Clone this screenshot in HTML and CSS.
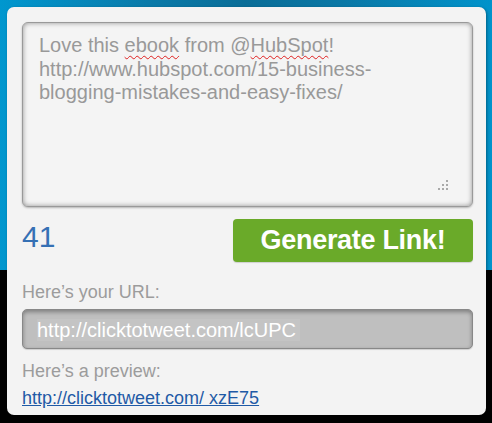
FILE: index.html
```html
<!DOCTYPE html>
<html>
<head>
<meta charset="utf-8">
<link rel="stylesheet" href="styles.css">
</head>
<body>
<div class="card">
  <div class="tweet-box">
    <div class="line">Love this <span class="misspelled">ebook</span> from @<span class="misspelled">HubSpot</span>!</div>
    <div class="line">http://www.hubspot.com/15-business-</div>
    <div class="line">blogging-mistakes-and-easy-fixes/</div>
    <svg class="grip" width="10" height="10" viewBox="0 0 10 10">
      <rect x="8" y="0" width="2" height="2" fill="#a9a9a9"/>
      <rect x="4" y="4" width="2" height="2" fill="#a9a9a9"/>
      <rect x="8" y="4" width="2" height="2" fill="#a9a9a9"/>
      <rect x="0" y="8" width="2" height="2" fill="#a9a9a9"/>
      <rect x="4" y="8" width="2" height="2" fill="#a9a9a9"/>
      <rect x="8" y="8" width="2" height="2" fill="#a9a9a9"/>
    </svg>
  </div>
  <div class="action-row">
    <div class="count">41</div>
    <div class="generate">Generate Link!</div>
  </div>
  <div class="label label-url">Here’s your URL:</div>
  <div class="url-field"><span class="url-text">http://clicktotweet.com/lcUPC</span></div>
  <div class="label label-preview">Here’s a preview:</div>
  <a class="preview-link" href="#">http://clicktotweet.com/ xzE75</a>
</div>
</body>
</html>
```
FILE: styles.css
```css
html, body {
  margin: 0;
  padding: 0;
}
body {
  width: 492px;
  height: 423px;
  overflow: hidden;
  font-family: "Liberation Sans", Arial, sans-serif;
  background:
    linear-gradient(to right, #0097cf 0%, #0a7aa9 30%, #0a6d97 50%, #0a78a6 70%, #0093cb 100%) top left / 100% 270px no-repeat,
    #000;
}
.card {
  margin: 7px 0 0 7px;
  width: 479px;
  height: 408px;
  box-sizing: border-box;
  padding: 15px 13px 0 15px;
  background: #f3f3f3;
  border-radius: 7px;
  box-shadow: 1px 1px 3px rgba(0, 0, 0, 0.35);
}
.tweet-box {
  position: relative;
  height: 185px;
  box-sizing: border-box;
  padding: 11px 16px 0 16px;
  border: 1px solid #999;
  border-radius: 6px;
  background: #f4f4f4;
  box-shadow: inset 0 0 5px rgba(0, 0, 0, 0.4), 0 1px 2px rgba(0, 0, 0, 0.25);
  color: #999;
  font-size: 20px;
  line-height: 23.5px;
}
.line {
  white-space: nowrap;
}
.misspelled {
  text-decoration: underline wavy #e02020;
  text-decoration-thickness: 1px;
  text-underline-offset: 3px;
  text-decoration-skip-ink: none;
}
.grip {
  position: absolute;
  right: 24px;
  bottom: 16px;
}
.action-row {
  display: flex;
  justify-content: space-between;
  align-items: flex-start;
  margin-top: 12px;
}
.count {
  margin-top: 3px;
  color: #3570b4;
  font-size: 30px;
  line-height: 30px;
}
.generate {
  width: 240px;
  height: 43px;
  box-sizing: border-box;
  background: #6aaa29;
  border-radius: 4px;
  color: #fff;
  font-weight: bold;
  font-size: 27px;
  letter-spacing: -0.3px;
  line-height: 43px;
  text-align: center;
  box-shadow: 0 1px 1px rgba(0, 0, 0, 0.15);
}
.label {
  color: #9c9c9c;
  font-size: 18px;
  line-height: 20px;
}
.label-url {
  margin-top: 20px;
}
.url-field {
  margin-top: 7px;
  height: 40px;
  box-sizing: border-box;
  padding-left: 14px;
  border: 1px solid #888;
  border-radius: 5px;
  background: #bfbfbf;
  box-shadow: inset 0 2px 4px rgba(0, 0, 0, 0.35), 0 1px 1px rgba(0, 0, 0, 0.15);
  color: #fff;
  font-size: 20px;
  line-height: 40px;
}
.url-text {
  background: #c4c4c4;
  padding-right: 4px;
}
.label-preview {
  margin-top: 12px;
}
.preview-link {
  display: inline-block;
  margin-top: 7px;
  color: #1f5aa6;
  font-size: 18px;
  line-height: 20px;
  text-decoration: underline;
}
```
